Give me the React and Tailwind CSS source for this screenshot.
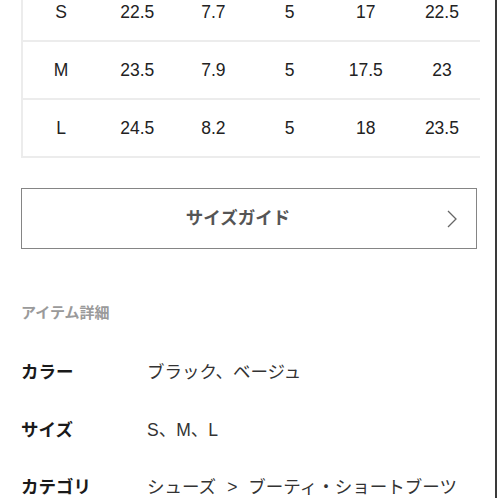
import React from "react";

const sizeRows = [
	["S", "22.5", "7.7", "5", "17", "22.5"],
	["M", "23.5", "7.9", "5", "17.5", "23"],
	["L", "24.5", "8.2", "5", "18", "23.5"],
];

const details = [
	{ label: "カラー", value: "ブラック、ベージュ" },
	{ label: "サイズ", value: "S、M、L" },
	{
		label: "カテゴリ",
		value: (
			<>
				シューズ<span className="mx-[11px]">&gt;</span>ブーティ・ショートブーツ
			</>
		),
	},
];

const font = {
	fontFamily: '"Liberation Sans", "Noto Sans CJK JP", sans-serif',
};

const App = () => {
	return (
		<div className="flex h-[498px] w-[498px] overflow-hidden bg-white" style={font}>
			<div className="w-[495px] overflow-hidden">
				<div className="-mt-[16px] ml-[21px] w-[459px] border-l-2 border-[#ececec]">
					{sizeRows.map((row) => (
						<div
							key={row[0]}
							className="grid h-[58px] grid-cols-6 items-center border-b-2 border-[#ececec] text-[17.5px] text-[#222]"
						>
							{row.map((cell, i) => (
								<div key={i} className="text-center">
									{cell}
								</div>
							))}
						</div>
					))}
				</div>

				<button className="ml-[21px] mt-[30px] flex h-[61px] w-[456px] items-center border border-[#858585] bg-white">
					<span className="flex-1 pl-[8px] text-center text-[17.5px] font-bold text-[#555]">
						サイズガイド
					</span>
					<svg
						width="12"
						height="20"
						viewBox="0 0 12 20"
						className="mr-[18px]"
						fill="none"
						stroke="#666"
						strokeWidth="1.3"
					>
						<path d="M2 2 L10 10 L2 18" />
					</svg>
				</button>

				<div className="ml-[21px] mt-[56px] text-[15px] font-bold leading-none text-[#9a9a9a]">
					アイテム詳細
				</div>

				<div className="ml-[21px] mt-[43px] flex flex-col gap-[39.5px]">
					{details.map((d) => (
						<div key={d.label} className="flex items-center text-[17.5px] leading-[18px]">
							<div className="w-[126px] font-bold text-[#1a1a1a]">{d.label}</div>
							<div className="whitespace-nowrap text-[#333]">{d.value}</div>
						</div>
					))}
				</div>
			</div>
			<div className="w-[2px] bg-[#3a3a3a]" />
		</div>
	);
};

export default App;
